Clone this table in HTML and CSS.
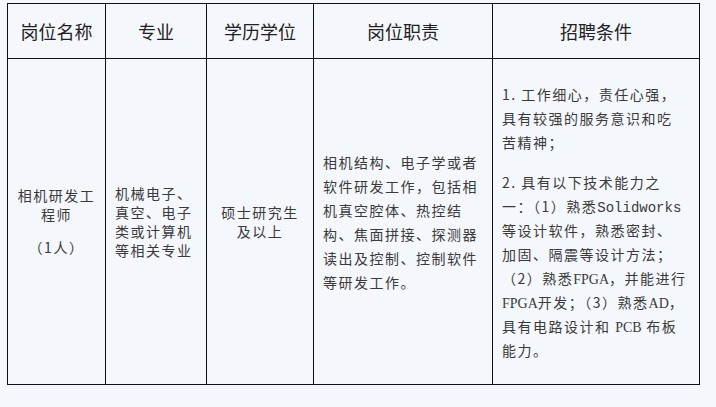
FILE: index.html
```html
<!DOCTYPE html>
<html lang="zh-CN">
<head>
<meta charset="utf-8">
<title>招聘岗位</title>
<link rel="stylesheet" href="styles.css">
</head>
<body>
<table class="jobs">
  <colgroup>
    <col class="w1"><col class="w2"><col class="w3"><col class="w4"><col class="w5">
  </colgroup>
  <thead>
    <tr>
      <th>岗位名称</th>
      <th>专业</th>
      <th>学历学位</th>
      <th>岗位职责</th>
      <th>招聘条件</th>
    </tr>
  </thead>
  <tbody>
    <tr>
      <td class="center tight">
        <p>相机研发工<br>程师</p>
        <p>（1人）</p>
      </td>
      <td class="left tight pad-major">机械电子、<br>真空、电子<br>类或计算机<br>等相关专业</td>
      <td class="center tight">硕士研究生<br>及以上</td>
      <td class="left loose">相机结构、电子学或者<br>软件研发工作，包括相<br>机真空腔体、热控结<br>构、焦面拼接、探测器<br>读出及控制、控制软件<br>等研发工作。</td>
      <td class="left loose">
        <p class="para">1. 工作细心，责任心强，<br>具有较强的服务意识和吃<br>苦精神；</p>
        <p class="para">2. 具有以下技术能力之<br>一：（1）熟悉<span class="mono">Solidworks</span><br>等设计软件，熟悉密封、<br>加固、隔震等设计方法；<br>（2）熟悉<span class="en">FPGA</span>，并能进行<br><span class="en">FPGA</span>开发；（3）熟悉<span class="en">AD</span>，<br>具有电路设计和 <span class="en">PCB</span> 布板<br>能力。</p>
      </td>
    </tr>
  </tbody>
</table>
</body>
</html>
```
FILE: styles.css
```css
html, body {
  margin: 0;
  background: #f4f7fc;
}

body {
  padding: 3px 0 0 7px;
  font-family: "Noto Sans CJK SC", "Noto Sans", sans-serif;
  color: #3a3a3a;
}

.jobs {
  border-collapse: collapse;
  table-layout: fixed;
  width: 692px;
}

.w1 { width: 98px; }
.w2 { width: 101px; }
.w3 { width: 107px; }
.w4 { width: 179px; }
.w5 { width: 207px; }

.jobs th,
.jobs td {
  border: 1px solid #111;
  vertical-align: middle;
}

.jobs th {
  height: 54px;
  padding: 0;
  font-size: 18px;
  font-weight: normal;
  color: #222;
  text-align: center;
  line-height: 24px;
}

.jobs td {
  height: 325px;
  padding: 0 6px 0 9px;
  font-size: 14px;
  letter-spacing: 1.5px;
  white-space: nowrap;
}

.center {
  text-align: center;
}

.center.tight {
  padding: 0 4px;
}

.left {
  text-align: left;
}

.pad-major {
  padding-left: 12px;
}

.tight {
  line-height: 19px;
}

.tight p {
  margin: 0;
}

.tight p + p {
  margin-top: 14px;
}

.loose {
  line-height: 24px;
}

.para {
  margin: 0;
}

.para + .para {
  margin-top: 16px;
}

.en {
  font-family: "Liberation Serif", serif;
  letter-spacing: 0;
  font-size: 14px;
  line-height: 1;
}

.mono {
  font-family: "Liberation Mono", monospace;
  letter-spacing: 0;
  font-size: 14px;
  line-height: 1;
}
```
